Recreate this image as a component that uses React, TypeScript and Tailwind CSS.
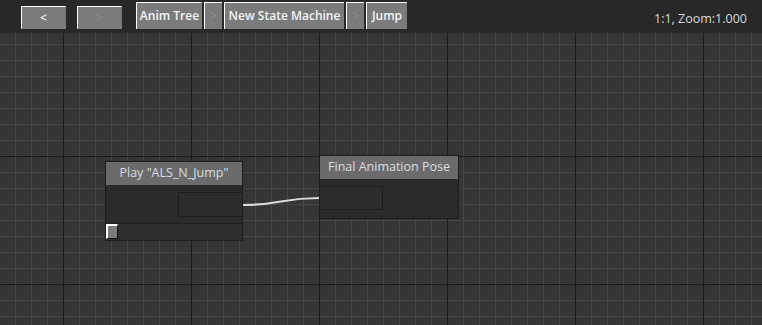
import React from 'react';

const W = 762;
const H = 292;

// grid: minor every 16px, major every 128px
function Grid() {
  const xs: number[] = [];
  for (let x = 15; x < W; x += 16) xs.push(x);
  const ys: number[] = [];
  for (let y = 11; y < H; y += 16) ys.push(y);
  const isMajorX = (x: number) => (x - 63) % 128 === 0;
  const isMajorY = (y: number) => (y - 123) % 128 === 0 || y === 123 - 128;

  return (
    <svg className="absolute inset-0" width={W} height={H}>
      {xs.filter((x) => !isMajorX(x)).map((x) => (
        <line key={'vx' + x} x1={x + 0.5} y1={0} x2={x + 0.5} y2={H} stroke="#464646" strokeWidth={1} />
      ))}
      {ys.filter((y) => !isMajorY(y)).map((y) => (
        <line key={'hy' + y} x1={0} y1={y + 0.5} x2={W} y2={y + 0.5} stroke="#464646" strokeWidth={1} />
      ))}
      {xs.filter(isMajorX).map((x) => (
        <line key={'mx' + x} x1={x + 0.5} y1={0} x2={x + 0.5} y2={H} stroke="#1b1b1b" strokeWidth={1} />
      ))}
      {ys.filter(isMajorY).map((y) => (
        <line key={'my' + y} x1={0} y1={y + 0.5} x2={W} y2={y + 0.5} stroke="#1b1b1b" strokeWidth={1} />
      ))}
    </svg>
  );
}

function NavButton({ label, disabled }: { label: string; disabled?: boolean }) {
  return (
    <button
      className={
        'mt-[6px] h-[23px] w-[45px] flex items-center justify-center border-t border-l border-t-white border-l-white border-r border-b border-r-[#7b7b7b] border-b-[#7b7b7b] bg-[#7b7b7b] text-[12px] font-semibold ' +
        (disabled ? 'text-[#8c8c8c]' : 'text-[#eef0f2]')
      }
    >
      {label}
    </button>
  );
}

function Crumb({ label, w, sep }: { label: string; w: string; sep?: boolean }) {
  return (
    <div
      className={
        'mt-[2px] h-[27px] flex items-center justify-center border-t border-l border-t-white border-l-white bg-[#7b7b7b] text-[12px] font-semibold ' +
        w +
        (sep ? ' text-[#8c8c8c]' : ' text-[#f2f4f6]')
      }
    >
      {label}
    </div>
  );
}

export default function App() {
  return (
    <div
      className="w-[762px] h-[325px] flex flex-col bg-[#353535] overflow-hidden"
      style={{ fontFamily: '"Open Sans", sans-serif' }}
    >
      {/* toolbar */}
      <div className="h-[33px] flex items-start bg-[#282828] pl-[21px] pr-[15px]">
        <div className="flex gap-[11px]">
          <NavButton label="<" />
          <NavButton label=">" disabled />
        </div>
        <div className="ml-[14px] flex gap-[2px]">
          <Crumb label="Anim Tree" w="w-[66px]" />
          <Crumb label=">" w="w-[18px]" sep />
          <Crumb label="New State Machine" w="w-[120px]" />
          <Crumb label=">" w="w-[18px]" sep />
          <Crumb label="Jump" w="w-[41px]" />
        </div>
        <div className="ml-auto h-[33px] flex items-center pt-[6px] text-[12.5px] text-[#d8d8d8]">
          1:1, Zoom:1.000
        </div>
      </div>

      {/* canvas */}
      <div className="relative flex-1 overflow-hidden">
        <Grid />

        <svg className="absolute inset-0" width={W} height={H}>
          <path d="M243,172 C281,172 281,165 319,165" fill="none" stroke="#dadada" strokeWidth={2.2} />
        </svg>

        {/* Play node */}
        <div className="absolute left-[105px] top-[128px] w-[138px] h-[80px] flex flex-col border border-[#1d1d1d] bg-[#2b2b2b]">
          <div className="h-[23px] flex items-center justify-center bg-[#6b6b6b] text-[12.5px] font-medium text-[#d6dde4]">
            Play "ALS_N_Jump"
          </div>
          <div className="flex-1 flex justify-end pt-[7px]">
            <div className="w-[65px] h-[25px] border border-[#1d1d1d] bg-[#2d2d2d] -mr-px" />
          </div>
          <div className="h-[17px] flex border-t border-[#1d1d1d] bg-[#2f2f2f]">
            <div className="w-[12px] h-[15px] border-t-2 border-l-2 border-t-white border-l-white bg-[#7b7b7b] border-r border-b border-r-[#111] border-b-[#111]" />
          </div>
        </div>

        {/* Final pose node */}
        <div className="absolute left-[319px] top-[122px] w-[140px] h-[64px] flex flex-col border border-[#1d1d1d] bg-[#2b2b2b]">
          <div className="h-[23px] flex items-center justify-center bg-[#6b6b6b] text-[12.5px] font-medium text-[#d6dde4]">
            Final Animation Pose
          </div>
          <div className="flex-1 pt-[7px]">
            <div className="w-[64px] h-[24px] border border-[#1d1d1d] bg-[#2d2d2d] -ml-px" />
          </div>
        </div>
      </div>
    </div>
  );
}
